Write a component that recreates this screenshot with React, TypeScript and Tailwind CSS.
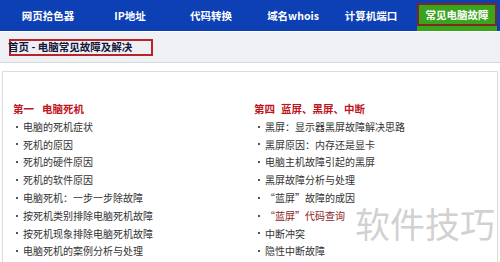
const navItems = [
  { label: "网页拾色器", w: "w-[96px]" },
  { label: "IP地址", w: "w-[68px]" },
  { label: "代码转换", w: "w-[94px]" },
  { label: "域名whois", w: "w-[70px]" },
  { label: "计算机端口", w: "w-[86px]" },
];

const leftItems = [
  "电脑的死机症状",
  "死机的原因",
  "死机的硬件原因",
  "死机的软件原因",
  "电脑死机：一步一步除故障",
  "按死机类别排除电脑死机故障",
  "按死机现象排除电脑死机故障",
  "电脑死机的案例分析与处理",
];

const rightItems = [
  { text: "黑屏：显示器黑屏故障解决思路" },
  { text: "黑屏原因：内存还是显卡" },
  { text: "电脑主机故障引起的黑屏" },
  { text: "黑屏故障分析与处理" },
  { text: "“蓝屏”故障的成因" },
  { text: "“蓝屏”代码查询", visited: true },
  { text: "中断冲突" },
  { text: "隐性中断故障" },
];

function Item({ text, visited }: { text: string; visited?: boolean }) {
  return (
    <li className="flex h-[17.8px] items-center leading-[17.8px]">
      <span className="ml-[3px] mr-[5px] h-[2px] w-[2px] shrink-0 bg-[#555]" />
      <span className={visited ? "text-[#8b1a1a]" : "text-[#333]"}>{text}</span>
    </li>
  );
}

export default function App() {
  return (
    <div
      className="relative h-[262px] w-[500px] overflow-hidden bg-white"
      style={{ fontFamily: '"Noto Sans CJK SC", "Liberation Sans", sans-serif' }}
    >
      {/* Top nav */}
      <div className="flex h-[31px] bg-[#0d40b4] text-[10.5px] font-bold text-white">
        {navItems.map((n) => (
          <div key={n.label} className={`${n.w} flex items-center justify-center`}>
            {n.label}
          </div>
        ))}
        <div className="ml-[3px] mt-[3px] flex h-[28px] w-[80px] flex-col bg-[#3aa41c]">
          <div className="flex h-[23px] items-center justify-center border-2 border-[#7a2a22] text-[10.5px]">
            常见电脑故障
          </div>
        </div>
      </div>

      {/* Breadcrumb */}
      <div className="mt-[1px] flex h-[31px] items-center border-b border-[#d3d7de] bg-[#eef0f4] pl-[9px]">
        <div className="flex h-[17px] w-[144px] items-center border-2 border-[#b8242c] text-[10.5px] font-bold text-[#14183a]">
          <span className="-ml-[3px]">首页 - 电脑常见故障及解决</span>
        </div>
      </div>

      {/* Content box */}
      <div className="mx-[2px] mt-[8px] h-[200px] border-l border-r border-t border-[#dcdcdc] pl-[10px] pt-[28px] text-[10px]">
        <div className="grid grid-cols-[241px_1fr]">
          <div>
            <div className="flex h-[17.8px] items-center text-[10.5px] font-bold text-[#c0141c]">
              <span>第一</span>
              <span className="ml-[8px]">电脑死机</span>
            </div>
            <ul>
              {leftItems.map((t) => (
                <Item key={t} text={t} />
              ))}
            </ul>
          </div>
          <div>
            <div className="flex h-[17.8px] items-center text-[10.5px] font-bold text-[#c0141c]">
              <span>第四</span>
              <span className="ml-[6px]">蓝屏、黑屏、中断</span>
            </div>
            <ul className="pl-[1px]">
              {rightItems.map((t) => (
                <Item key={t.text} text={t.text} visited={t.visited} />
              ))}
            </ul>
          </div>
        </div>
      </div>

      {/* Watermark */}
      <div className="pointer-events-none absolute left-[355px] top-[201px] text-[35px] leading-[44px] text-[#bdbdbd]/70">
        软件技巧
      </div>
    </div>
  );
}
